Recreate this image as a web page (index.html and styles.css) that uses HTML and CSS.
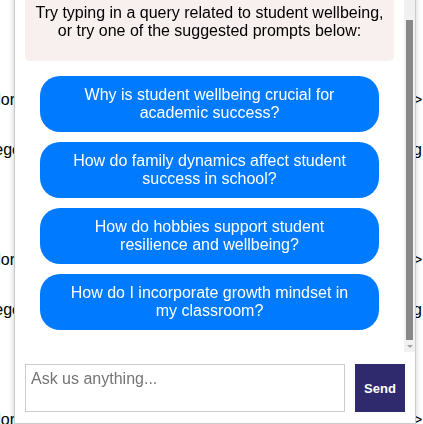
FILE: index.html
```html
<!DOCTYPE html>
<html lang="en">
<head>
  <meta charset="UTF-8">
  <meta name="viewport" content="width=device-width, initial-scale=1.0">
  <title>Student Wellbeing Assistant</title>
  <link rel="stylesheet" href="styles.css">
</head>
<body>
  <!-- Page content behind the chat widget -->
  <main class="page">
    <div class="entry">
      <div class="line"><span class="edge-left">Counselor</span><span class="edge-right">&gt;</span></div>
      <div class="line"><span class="edge-left wide">College</span><span class="edge-right">g</span></div>
    </div>
    <div class="entry">
      <div class="line"><span class="edge-left">Counselor</span><span class="edge-right">&gt;</span></div>
      <div class="line"><span class="edge-left wide">College</span><span class="edge-right">g</span></div>
    </div>
    <div class="entry">
      <div class="line"><span class="edge-left">Counselor</span><span class="edge-right">&gt;</span></div>
    </div>
  </main>

  <div class="chat-widget">
    <div class="chat-body">
      <div class="chat-messages">
        <div class="chat-inner">
          <div class="intro">
            <p class="intro-title">Welcome to the Student Wellbeing Assistant!</p>
            <p>I can help you explore research, strategies and resources that support the wellbeing of students in your school.</p>
            <p>Try typing in a query related to student wellbeing,<br>or try one of the suggested prompts below:</p>
          </div>

          <div class="suggestions">
            <button class="suggestion">Why is student wellbeing crucial for academic success?</button>
            <button class="suggestion">How do family dynamics affect student success in school?</button>
            <button class="suggestion">How do hobbies support student resilience and wellbeing?</button>
            <button class="suggestion">How do I incorporate growth mindset in my classroom?</button>
          </div>
        </div>
      </div>

      <!-- scroll rail, scrolled to the bottom -->
      <div class="scroll-rail">
        <div class="rail-btn up"></div>
        <div class="rail-track">
          <div class="rail-thumb"></div>
        </div>
        <div class="rail-btn down"></div>
      </div>
    </div>

    <div class="chat-input">
      <textarea placeholder="Ask us anything..."></textarea>
      <button class="send-btn">Send</button>
    </div>
  </div>
</body>
</html>
```

FILE: styles.css
```css
body {
  margin: 0;
  font-family: "Liberation Sans", Arial, sans-serif;
  font-size: 16px;
  color: black;
  background-color: white;
  overflow: hidden;
}

/* Page behind the widget */
.page {
  height: 100vh;
  overflow: hidden;
  padding-top: 91px;
  box-sizing: border-box;
}

.entry {
  display: flex;
  flex-direction: column;
  gap: 32px;
  height: 160px;
}

.line {
  display: flex;
  justify-content: space-between;
  line-height: 18px;
  white-space: nowrap;
}

.edge-left {
  width: 15px;
  overflow: hidden;
  display: flex;
  justify-content: flex-end;
}

.edge-left.wide {
  width: 21px;
}

.edge-right {
  width: 10px;
  overflow: hidden;
}

/* Chat widget */
.chat-widget {
  position: fixed;
  left: 14px;
  bottom: 0;
  width: 402px;
  height: 484px;
  box-sizing: border-box;
  border: 1px solid #ccc;
  background-color: white;
  box-shadow: 0 0 6px rgba(0, 0, 0, 0.2);
  display: flex;
  flex-direction: column;
}

.chat-body {
  flex: 1;
  min-height: 0;
  display: flex;
}

.chat-messages {
  flex: 1;
  overflow-y: auto;
  scrollbar-width: none;
  display: flex;
  flex-direction: column-reverse;
}

.scroll-rail {
  width: 11px;
  background-color: #f1f1f1;
  display: flex;
  flex-direction: column;
}

.rail-btn {
  height: 12px;
  display: flex;
  align-items: center;
  justify-content: center;
}

.rail-btn.down::after {
  content: "";
  border-left: 3px solid transparent;
  border-right: 3px solid transparent;
  border-top: 3px solid #a3a3a3;
}

.rail-btn.up::after {
  content: "";
  border-left: 3px solid transparent;
  border-right: 3px solid transparent;
  border-bottom: 3px solid #a3a3a3;
}

.rail-track {
  flex: 1;
  display: flex;
  flex-direction: column;
  justify-content: flex-end;
}

.rail-thumb {
  height: 320px;
  margin: 0 2px;
  background-color: #888;
}

.chat-inner {
  padding: 10px;
}

.intro {
  background-color: #f8f0ee;
  border-radius: 5px;
  padding: 15px 10px;
  text-align: center;
  line-height: 18px;
}

.intro p {
  margin: 0 0 10px;
}

.intro p:last-child {
  margin-bottom: 6px;
}

.intro-title {
  font-weight: bold;
}

.suggestions {
  display: flex;
  flex-direction: column;
  gap: 10px;
  margin: 15px 15px 12px;
}

.suggestion {
  background-color: #007bff;
  color: white;
  border: none;
  border-radius: 20px;
  padding: 10px 20px;
  font-family: "Liberation Sans", Arial, sans-serif;
  font-size: 16px;
  line-height: 18px;
  cursor: pointer;
}

.chat-input {
  display: flex;
  gap: 10px;
  padding: 12px 10px 11px;
}

.chat-input textarea {
  flex: 1;
  height: 48px;
  box-sizing: border-box;
  border: 1px solid #ccc;
  padding: 5px;
  resize: none;
  font-family: "Liberation Sans", Arial, sans-serif;
  font-size: 16px;
}

.send-btn {
  width: 50px;
  height: 48px;
  background-color: #2f2a6d;
  color: white;
  border: none;
  font-family: "Liberation Sans", Arial, sans-serif;
  font-size: 13px;
  font-weight: bold;
  cursor: pointer;
}
```
